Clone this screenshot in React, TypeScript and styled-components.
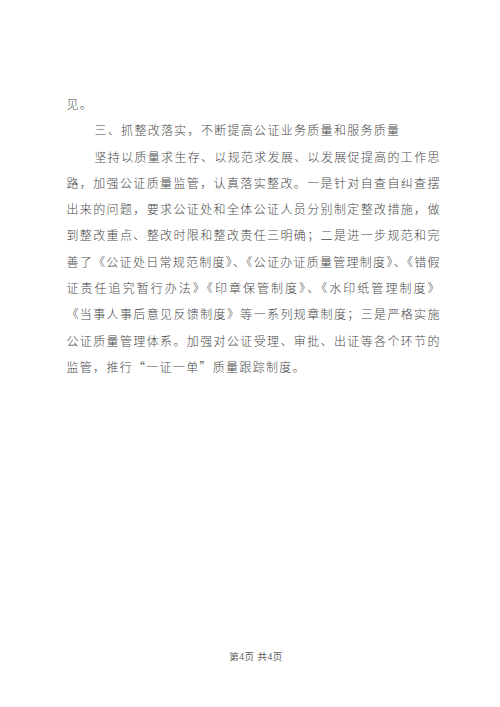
import React from 'react';
import styled, { createGlobalStyle } from 'styled-components';

const GlobalStyle = createGlobalStyle`
  html, body {
    margin: 0;
    padding: 0;
    background: #ffffff;
  }
  body {
    font-family: "Noto Sans CJK SC", "Noto Sans", sans-serif;
  }
`;

type LineData = {
  text: string;
  indent?: boolean;
  justify?: boolean;
};

const lines: LineData[] = [
  { text: '见。' },
  { text: '三、抓整改落实，不断提高公证业务质量和服务质量', indent: true },
  { text: '坚持以质量求生存、以规范求发展、以发展促提高的工作思', indent: true, justify: true },
  { text: '路，加强公证质量监管，认真落实整改。一是针对自查自纠查摆', justify: true },
  { text: '出来的问题，要求公证处和全体公证人员分别制定整改措施，做', justify: true },
  { text: '到整改重点、整改时限和整改责任三明确；二是进一步规范和完', justify: true },
  { text: '善了《公证处日常规范制度》、《公证办证质量管理制度》、《错假', justify: true },
  { text: '证责任追究暂行办法》《印章保管制度》、《水印纸管理制度》', justify: true },
  { text: '《当事人事后意见反馈制度》等一系列规章制度；三是严格实施', justify: true },
  { text: '公证质量管理体系。加强对公证受理、审批、出证等各个环节的', justify: true },
  { text: '监管，推行“一证一单”质量跟踪制度。', wide: true } as LineData,
];

export default function App() {
  return (
    <>
      <GlobalStyle />
      <Page>
        <Body>
          {lines.map((line, i) => (
            <Line key={i} $indent={line.indent} $justify={line.justify}>
              {line.text}
            </Line>
          ))}
        </Body>
        <Footer>第4页 共4页</Footer>
      </Page>
    </>
  );
}

const Page = styled.div`
  width: 500px;
  height: 707px;
  background: #ffffff;
  display: flex;
  flex-direction: column;
  align-items: center;
  padding-top: 91px;
  box-sizing: border-box;
`;

const Body = styled.div`
  width: 373px;
  margin-left: 6px;
  color: #484848;
  font-size: 12px;
  font-weight: 300;
  line-height: 26.3px;
`;

const Line = styled.div<{ $indent?: boolean; $justify?: boolean }>`
  height: 26.3px;
  white-space: nowrap;
  padding-left: ${p => (p.$indent ? '28px' : '0')};
  letter-spacing: ${p => (p.$justify ? '0' : '1.3px')};
  text-align: ${p => (p.$justify ? 'justify' : 'left')};
  text-align-last: ${p => (p.$justify ? 'justify' : 'auto')};
  text-justify: inter-character;
  ${p => p.$justify && 'white-space: normal;'}
`;

const Footer = styled.div`
  margin-top: auto;
  margin-bottom: 44px;
  margin-left: 12px;
  font-family: "Liberation Serif", "Noto Sans CJK SC", serif;
  font-size: 9.5px;
  color: #5a5a5a;
  letter-spacing: 0.5px;
`;
